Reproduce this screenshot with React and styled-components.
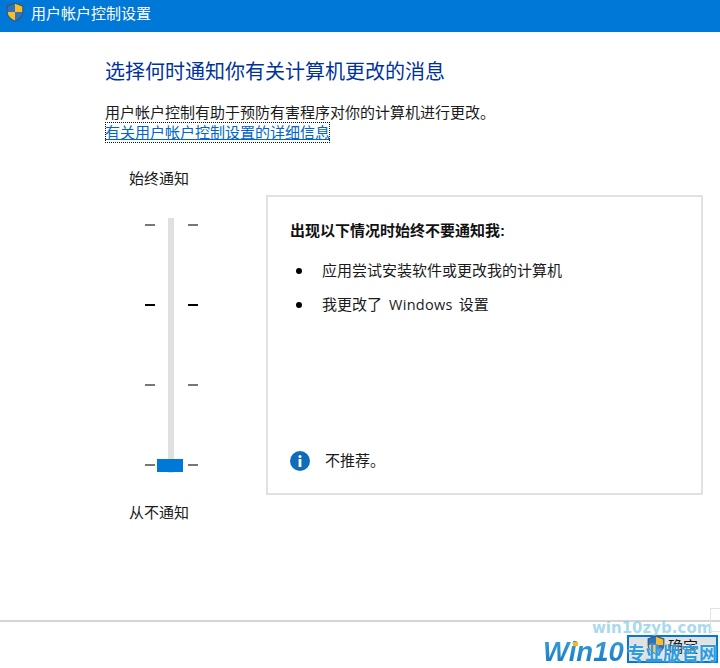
import React from "react";
import styled, { createGlobalStyle } from "styled-components";

const Global = createGlobalStyle`
  html, body { margin: 0; padding: 0; background: #fff; }
  body { font-family: "Liberation Sans", "Noto Sans CJK SC", sans-serif; }
`;

const Window = styled.div`
  width: 720px;
  height: 668px;
  display: flex;
  flex-direction: column;
  position: relative;
  overflow: hidden;
  color: #1a1a1a;
`;

const TitleBar = styled.div`
  height: 32px;
  flex: none;
  background: #0078d7;
  color: #fff;
  display: flex;
  align-items: center;
  gap: 7px;
  padding: 0 0 8px 6px;
  box-sizing: border-box;
  font-size: 15px;
`;

const Content = styled.div`
  flex: 1;
  padding: 26px 17px 0 105px;
`;

const Heading = styled.div`
  font-size: 20px;
  line-height: 28px;
  color: #003399;
`;

const Intro = styled.div`
  margin-top: 16px;
  font-size: 15px;
  line-height: 21px;
`;

const HelpLink = styled.a`
  display: block;
  width: fit-content;
  margin-top: -1px;
  color: #0066cc;
  text-decoration: underline;
  font-size: 15px;
  line-height: 20px;
  outline: 1px dotted #111;
  outline-offset: -1px;
  padding: 1px 0 0;
`;

const Settings = styled.div`
  display: flex;
  align-items: flex-start;
`;

const SliderColumn = styled.div`
  width: 161px;
  flex: none;
  padding: 25px 0 0 24px;
  box-sizing: border-box;
`;

const SliderLabel = styled.div`
  font-size: 15px;
  line-height: 21px;
  margin-top: ${(p) => p.$gap || 0}px;
`;

const Slider = styled.div`
  position: relative;
  width: 53px;
  height: 255px;
  margin: 29px 0 0 16px;
  display: flex;
  flex-direction: column;
  justify-content: space-between;
  padding: 6px 0 7px;
  box-sizing: border-box;
`;

const Track = styled.div`
  position: absolute;
  left: 23px;
  top: 0;
  bottom: 0;
  width: 6px;
  background: #e0e0e0;
`;

const Thumb = styled.div`
  position: absolute;
  left: 12px;
  bottom: 1px;
  width: 26px;
  height: 13px;
  background: #0078d7;
`;

const TickRow = styled.div`
  display: flex;
  justify-content: space-between;
`;

const Tick = styled.span`
  width: 10px;
  height: 2px;
  background: ${(p) => (p.$strong ? "#000" : "#777")};
`;

const Panel = styled.div`
  width: 437px;
  height: 300px;
  box-sizing: border-box;
  margin-top: 52px;
  border: 2px solid #e1e1e1;
  padding: 24px 22px 22px;
  display: flex;
  flex-direction: column;
`;

const PanelTitle = styled.div`
  font-size: 15px;
  line-height: 20px;
  font-weight: 700;
  color: #111;
`;

const Bullets = styled.ul`
  list-style: none;
  margin: 19px 0 0;
  padding: 0;
  display: flex;
  flex-direction: column;
  gap: 13px;
  flex: 1;
`;

const Bullet = styled.li`
  display: flex;
  align-items: center;
  gap: 20px;
  font-size: 15px;
  line-height: 21px;
  padding-left: 6px;
  &::before {
    content: "";
    width: 6px;
    height: 6px;
    border-radius: 50%;
    background: #000;
    flex: none;
  }
`;

const Latin = styled.span`
  font-family: "Open Sans", sans-serif;
  font-size: 14.5px;
  letter-spacing: 0.3px;
  margin: 0 6px 0 7px;
`;

const Note = styled.div`
  display: flex;
  align-items: center;
  gap: 15px;
  font-size: 15px;
  line-height: 21px;
`;

const Footer = styled.div`
  height: 48px;
  flex: none;
  box-sizing: border-box;
  border-top: 2px solid #d4d4d4;
  display: flex;
  justify-content: flex-end;
  align-items: flex-start;
  padding: 13px 2px 0 0;
`;

const OkButton = styled.div`
  width: 91px;
  height: 28px;
  box-sizing: border-box;
  border: 2px solid #0078d7;
  background: #e1e1e1;
  display: flex;
  align-items: center;
  justify-content: center;
  gap: 3px;
  padding-bottom: 8px;
  font-size: 15px;
  color: #111;
`;

const WatermarkSite = styled.div`
  position: absolute;
  left: 592px;
  top: 619px;
  font-family: "DejaVu Sans", sans-serif;
  font-weight: 700;
  font-size: 15px;
  color: rgba(130, 200, 230, 0.7);
`;

const WatermarkCorner = styled.div`
  position: absolute;
  left: 710px;
  top: 608px;
  width: 12px;
  height: 24px;
  border: 1px solid #e2e2e2;
  box-sizing: border-box;
`;

const WatermarkLogo = styled.div`
  position: absolute;
  left: 543px;
  top: 635px;
  font-family: "Liberation Sans", sans-serif;
  font-weight: 700;
  font-style: italic;
  font-size: 27.5px;
  line-height: 34px;
  background: linear-gradient(180deg, #3fa3de, #0f74bd);
  -webkit-background-clip: text;
  background-clip: text;
  color: transparent;
`;

const WatermarkDot = styled.div`
  position: absolute;
  left: 573px;
  top: 642px;
  width: 5px;
  height: 4px;
  background: #f5b921;
`;

const WatermarkName = styled.div`
  position: absolute;
  left: 627px;
  top: 642px;
  font-weight: 700;
  font-size: 18px;
  line-height: 24px;
  color: #2a9ce0;
  text-shadow: 0 0 2px rgba(255, 255, 255, 0.8);
`;

const Shield = ({ size }) => (
  <svg width={size} height={size * 1.12} viewBox="1.200 0.200 13.600 15.600">
    <path d="M8 .5 14.500 3v5c0 3.600-2.700 6-6.500 7.500C4.200 14 1.500 11.600 1.500 8V3z" fill="#35567c" />
    <path d="M8 1.600 2.400 3.700V8H8z" fill="#2f74b8" />
    <path d="M8 8h5.600c0 3-2.400 5.200-5.600 6.500z" fill="#2f74b8" />
    <path d="M8 1.600l5.600 2.100V8H8z" fill="#fbbc28" />
    <path d="M8 8H2.400c0 3 2.400 5.200 5.600 6.500z" fill="#fbbc28" />
  </svg>
);

const InfoIcon = () => (
  <svg width="20" height="20" viewBox="0 0 20 20">
    <circle cx="10" cy="10" r="10" fill="#0f6cbd" />
    <circle cx="10" cy="5.500" r="1.500" fill="#fff" />
    <rect x="8.600" y="8" width="2.800" height="8" fill="#fff" />
  </svg>
);

const ticks = [false, true, false, false];

export default function App() {
  return (
    <Window>
      <Global />
      <TitleBar>
        <Shield size={18} />
        用户帐户控制设置
      </TitleBar>
      <Content>
        <Heading>选择何时通知你有关计算机更改的消息</Heading>
        <Intro>用户帐户控制有助于预防有害程序对你的计算机进行更改。</Intro>
        <HelpLink>有关用户帐户控制设置的详细信息</HelpLink>
        <Settings>
          <SliderColumn>
            <SliderLabel>始终通知</SliderLabel>
            <Slider>
              <Track />
              {ticks.map((strong, i) => (
                <TickRow key={i}>
                  <Tick $strong={strong} />
                  <Tick $strong={strong} />
                </TickRow>
              ))}
              <Thumb />
            </Slider>
            <SliderLabel $gap={29}>从不通知</SliderLabel>
          </SliderColumn>
          <Panel>
            <PanelTitle>出现以下情况时始终不要通知我:</PanelTitle>
            <Bullets>
              <Bullet>应用尝试安装软件或更改我的计算机</Bullet>
              <Bullet>
                <span>我更改了<Latin>Windows</Latin>设置</span>
              </Bullet>
            </Bullets>
            <Note>
              <InfoIcon />
              不推荐。
            </Note>
          </Panel>
        </Settings>
      </Content>
      <Footer>
        <OkButton>
          <Shield size={18} />
          确定
        </OkButton>
      </Footer>
      <WatermarkSite>win10zyb.com</WatermarkSite>
      <WatermarkCorner />
      <WatermarkLogo>Win10</WatermarkLogo>
      <WatermarkDot />
      <WatermarkName>专业版官网</WatermarkName>
    </Window>
  );
}
